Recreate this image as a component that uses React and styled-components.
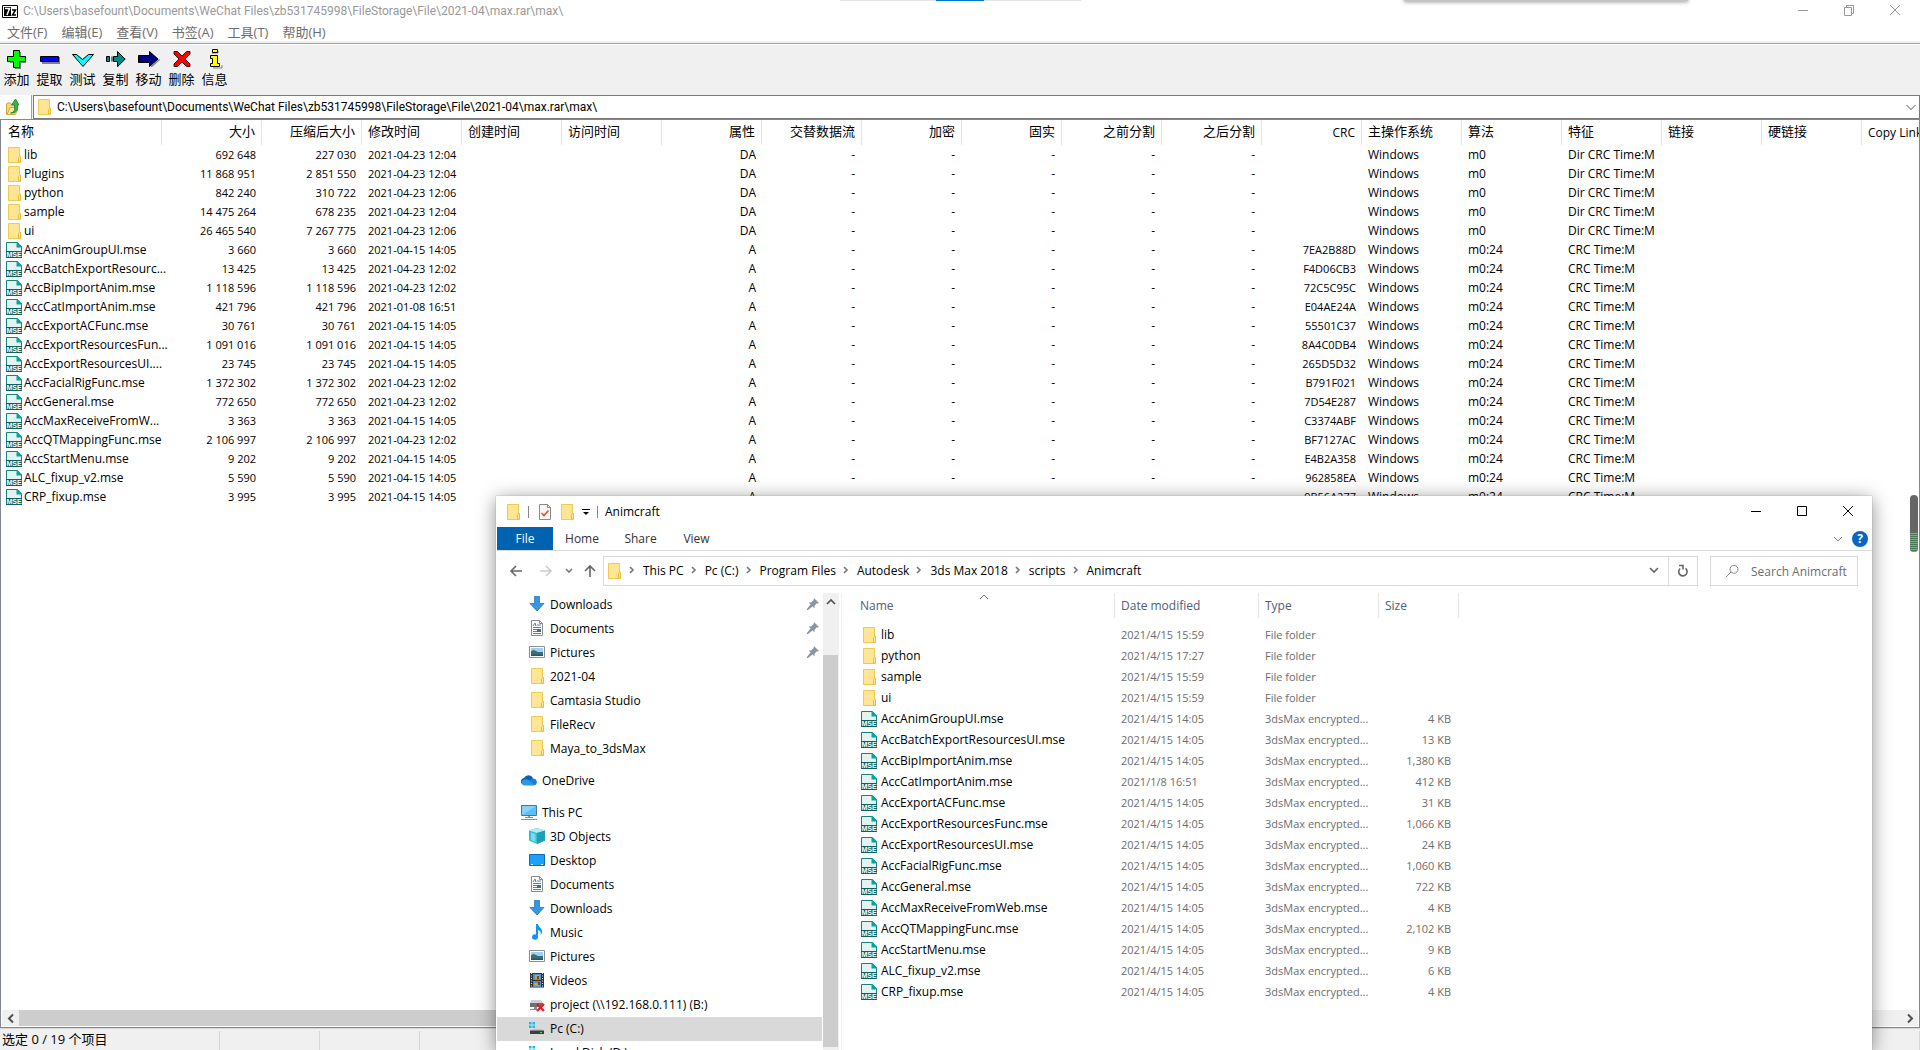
import React from "react";
import styled, { createGlobalStyle, css } from "styled-components";

const Global = createGlobalStyle`
  *, *::before, *::after { box-sizing: border-box; }
  html, body { margin: 0; padding: 0; overflow: hidden; }
  body, button, input, table {
    font-family: "Open Sans", "Noto Sans CJK SC", sans-serif;
    font-size: 12px;
    color: #000;
  }
  button { border: 0; padding: 0; margin: 0; background: none; cursor: default; white-space: nowrap; }
  input { border: 0; padding: 0; margin: 0; background: none; outline: none; min-width: 0; }
  svg { display: block; flex: none; }
`;

/* ---------- icons ---------- */

const Folder = () => (
  <svg width="16" height="16" viewBox="0 0 16 16" aria-hidden="true">
    <path d="M2.500.5h11v9h1v6h-12z" fill="#ffe594" stroke="#efca50" />
    <path d="M12.500 15v-4.500l1-1h1v5.500z" fill="#ffeaa8" stroke="#e8bd3a" />
  </svg>
);

const Mse = () => (
  <svg width="16" height="16" viewBox="0 0 16 16" aria-hidden="true">
    <path d="M.5.5h10.500l4.500 4.500v10.500H.5z" fill="#e3f3f1" stroke="#16827c" />
    <path d="M10.500 0h1L16 4.500V5.500h-5.500z" fill="#0aa39b" />
    <path d="M0 9h16v7H0z" fill="#0c6361" />
    <text x="8" y="15" textAnchor="middle" fontSize="7" fontWeight="700" fill="#fff" fontFamily="Liberation Sans, sans-serif">MSE</text>
  </svg>
);

const SevenZip = () => (
  <svg width="16" height="13" viewBox="0 0 16 13" aria-hidden="true">
    <path d="M.5.5h15v12H.5z" fill="#fff" stroke="#000" />
    <path d="M2 2h7v9H2z" fill="#000" />
    <path d="M3 3.500h4.500L5 10" fill="none" stroke="#fff" strokeWidth="1.500" />
    <path d="M10 5h3.500L10.500 10H14" fill="none" stroke="#000" strokeWidth="1.500" />
  </svg>
);

const toolIcons = {
  add: (
    <>
      <path d="M10 4h6v5h5v6h-5v6h-6v-6H5V9h5z" fill="#808080" />
      <path d="M8.500 2.500h6v6h6v5h-6v6h-6v-6h-6v-5h6z" fill="#0f0" stroke="#000" />
    </>
  ),
  extract: (
    <>
      <path d="M4 9h18v7H4z" fill="#808080" />
      <path d="M2.500 8.500h18v5h-18z" fill="#00f" stroke="#000" />
    </>
  ),
  test: <path d="M1.500 6.500h4l6 5 6-5h5L12 18.500z" fill="#0ff" stroke="#000" />,
  copy: (
    <>
      <path d="M13 17l8-7 1 1-8 8h-1z" fill="#808080" />
      <path d="M2.500 8.500h3v5h-3zM8 8.500v5M9.500 8.500h4v-5l7.500 7.500-7.500 7.500v-5h-4z" fill="#088" stroke="#000" />
    </>
  ),
  move: (
    <>
      <path d="M14 18l8-7 1 1-8 7h-1z" fill="#808080" />
      <path d="M1.500 7.500h11v-4L21 11l-8.500 7.500v-4h-11z" fill="#000080" stroke="#000" />
    </>
  ),
  remove: (
    <path d="M4 3.500h3.500L12 8l4.500-4.500H20V6l-5 5 5 5v2.500h-3.500L12 14l-4.500 4.500H4V16l5-5-5-5z" fill="#f00" stroke="#000" strokeWidth=".8" />
  ),
  info: (
    <>
      <path d="M9 5h6V3M10 20h9v-3" fill="none" stroke="#808080" />
      <path d="M9.500 1.500h5v3h-5zM7.500 7.500h7v8h2v3h-9v-3h2v-5h-2z" fill="#ff0" stroke="#000" />
    </>
  ),
};

const UpFolder = () => (
  <svg width="16" height="18" viewBox="0 0 16 18" aria-hidden="true">
    <path d="M1.500 6l1-1h3l1 1.500h3v9l-8 1z" fill="#f3dc80" stroke="#c9a736" />
    <path d="M2 16.500L5 9.500h8l-2.500 7z" fill="#fbeda9" stroke="#d0ac3c" />
    <path d="M5.500 15c4-.5 4.500-3 4-8H6.500l4-6 3.500 6h-1.500c.7 5-1 8.500-7 8z" fill="#39b54a" stroke="#1c7a2b" strokeWidth=".8" />
  </svg>
);

const Stroke = ({ d, w = 12, h = 12, color = "#666", width = 1 }) => (
  <svg width={w} height={h} viewBox={`0 0 ${w} ${h}`} fill="none" stroke={color} strokeWidth={width} aria-hidden="true">
    <path d={d} />
  </svg>
);

const Refresh = () => (
  <Stroke w={12} h={14} color="#666" width={1.6} d="M3.200 4.500A4.200 4.200 0 1 0 8.500 4.400M2 1.500h4v4" />
);

const navIcons = {
  downloads: <path d="M5.500.5h5v7h4.500L8 15 1 7.500h4.500z" fill="#3795e6" stroke="#2a78c0" strokeWidth=".8" />,
  documents: (
    <>
      <path d="M2.500.5h8l3 3v12h-11z" fill="#fff" stroke="#8a8a8a" />
      <path d="M10.500.5v3h3" fill="none" stroke="#8a8a8a" />
      <path d="M4 6l2-3 1 3M8 5h4M4 7.500h8M4 9.500h4M4 11.500h4M4 13.500h8" fill="none" stroke="#3f86c6" />
      <path d="M8 9h4v3H8z" fill="#2f7391" />
    </>
  ),
  pictures: (
    <>
      <path d="M.5 2.500h15v11H.5z" fill="#fff" stroke="#8a8f94" />
      <path d="M2 4h12v8H2z" fill="#9ed0f4" />
      <path d="M2 7l3-1 4 2h5v4H2z" fill="#3c7079" />
      <path d="M2 10.500h12V12H2z" fill="#29566c" />
    </>
  ),
  onedrive: (
    <>
      <path d="M1 12a3.500 3.500 0 0 1 2-6A5 5 0 0 1 12 6l-3 7H3z" fill="#0f5fb6" />
      <path d="M3 13.500a3 3 0 0 1-1-5.500c3-1.500 5-.5 6 .5l4-1.500a3.300 3.300 0 0 1 1 6.500z" fill="#2899e8" />
      <path d="M8 8.500l4-2a3.500 3.500 0 0 1 2 6.500z" fill="#1780d4" />
    </>
  ),
  pc: (
    <>
      <path d="M.5 1.500h15v10H.5z" fill="#5cc0f8" stroke="#3d7ba5" />
      <path d="M1 11V2h14z" fill="#86d2fc" />
      <path d="M7 12h2v1.500H7z" fill="#8aa0ae" />
      <path d="M4 13.500h8M0 15.500h16" stroke="#7f95a3" fill="none" />
    </>
  ),
  objects: (
    <>
      <path d="M8 0l8 2.500v10L8 16l-8-3.500v-10z" fill="#31bfd3" />
      <path d="M8 0l8 2.500L8 5 0 2.500z" fill="#b1eaf2" />
      <path d="M8 5l8-2.500v10L8 16z" fill="#1aa0b8" />
      <path d="M2 4.500l4.500 1.500v8L2 12z" fill="#7bdbe8" />
    </>
  ),
  desktop: (
    <>
      <path d="M.5 2.500h15v11H.5z" fill="#1ba1fb" stroke="#0b6cb8" />
      <path d="M2 12.500h2M12 12.500h2" stroke="#d6efff" fill="none" />
    </>
  ),
  music: <path d="M7 0h2c0 3 4.500 4 4 8.500-.3 1-.8 2-1.500 2.500.8-3-.5-4.500-2.500-5v7a3 2.700 0 1 1-2-2.500z" fill="#0c97f2" />,
  videos: (
    <>
      <path d="M1 1h14v14.500H1z" fill="#333" />
      <path d="M4 2h8v6H4zM4 9h8v6H4z" fill="#4d8fd4" />
      <path d="M6 3h5v4H6zM5 11h5v3H5z" fill="#d4a12c" />
      <path d="M8 4h2v3H8zM9 10h2v3H9z" fill="#6b4b1c" />
      <path d="M2.500 1v14M13.500 1v14" stroke="#ddd" strokeDasharray="1 1.500" fill="none" />
    </>
  ),
  netdrive: (
    <>
      <path d="M2 4h10l2 3H1z" fill="#cfcfcf" />
      <path d="M1 7h13v4H1z" fill="#6e6e6e" />
      <path d="M5 11h3v3H1v-1h4z" fill="#8c8c8c" />
      <path d="M8 8l7 7M15 8l-7 7" stroke="#dc1f26" strokeWidth="2.200" fill="none" />
    </>
  ),
  cdrive: (
    <>
      <path d="M0 2h2.500v2.500H0zM3.500 2H6v2.500H3.500zM0 5.500h2.500V8H0zM3.500 5.500H6V8H3.500z" fill="#1cb7ef" />
      <path d="M4 9h9l1.500 1.500h-13z" fill="#c3c3c3" />
      <path d="M1 10.500h14V14H1z" fill="#3d3d3d" />
      <path d="M11 12h2v1h-2z" fill="#52e052" />
    </>
  ),
};

const NavIcon = ({ name }) =>
  name === "folder" ? (
    <Folder />
  ) : (
    <svg width="16" height="16" viewBox="0 0 16 16" aria-hidden="true">{navIcons[name]}</svg>
  );

const Pin = () => (
  <svg width="12" height="12" viewBox="0 0 12 12" aria-hidden="true">
    <path d="M7 0l5 5-1.500.5-1 0-2 2.500v2.500L5.500 8.500 1 12l-1 0 0-1L3.500 6.500 1.500 4.500H4L6.500 2.500z" fill="#8a97a3" />
  </svg>
);

/* ---------- archive manager ---------- */

const Screen = styled.div`
  position: relative;
  display: flex;
  flex-direction: column;
  height: 100vh;
  background: #fff;
  overflow: hidden;
`;

const TitleBar = styled.header`
  display: flex;
  align-items: center;
  height: 24px;
  padding: 0 1px 2px 2px;
  gap: 5px;
  color: #999;
`;

const TitleText = styled.span`
  flex: 1;
  font-family: Roboto, sans-serif;
  white-space: nowrap;
`;

const Controls = styled.div`
  display: flex;
  align-self: flex-start;
  padding-right: 1px;
`;

const ControlButton = styled.button`
  display: flex;
  align-items: center;
  justify-content: center;
  width: 46px;
  height: ${(p) => (p.$tall ? "30px" : "20px")};
`;

const MenuBar = styled.nav`
  display: flex;
  gap: 14px;
  height: 17px;
  padding-left: 7px;
`;

const MenuButton = styled.button`
  font-size: 13px;
  line-height: 17px;
  color: #6d6d6d;
`;

const Divider = styled.div`
  height: 4px;
  border-top: 2px solid #f0f0f0;
  border-bottom: 1px solid #fff;
  background: #a0a0a0;
`;

const Toolbar = styled.div`
  display: flex;
  height: 50px;
  padding-top: 3px;
  background: #f0f0f0;
`;

const ToolButton = styled.button`
  display: flex;
  flex-direction: column;
  align-items: center;
  width: 33px;
  font-size: 13px;
  line-height: 18px;
`;

const AddressRow = styled.div`
  display: flex;
  height: 24px;
  gap: 1px;
  background: #f0f0f0;
`;

const UpButton = styled.button`
  display: flex;
  align-items: center;
  width: 32px;
  padding-left: 5px;
  background: #fff;
  border-right: 1px solid #a0a0a0;
`;

const PathBox = styled.div`
  display: flex;
  flex: 1;
  align-items: center;
  gap: 5px;
  padding: 0 2px;
  background: #fff;
  border: 1px solid #7a7a7a;
`;

const PathInput = styled.input`
  flex: 1;
  font-family: Roboto, sans-serif;
`;

const ListPane = styled.main`
  display: flex;
  flex: 1;
  flex-direction: column;
  min-height: 0;
  border: 1px solid #828790;
`;

const ListScroll = styled.div`
  flex: 1;
  min-height: 0;
  padding-left: 1px;
  overflow: hidden;
`;

const cellText = css`
  padding: 0 6px;
  white-space: nowrap;
  text-align: ${(p) => (p.$right ? "right" : "left")};
`;

const ArchiveTable = styled.table`
  width: 1960px;
  table-layout: fixed;
  border-collapse: separate;
  border-spacing: 0;
`;

const ArchiveHead = styled.th`
  ${cellText}
  height: 25px;
  padding-bottom: ${(p) => (p.$latin ? "0" : "2px")};
  font-size: ${(p) => (p.$latin ? "12px" : "13px")};
  line-height: 19px;
  font-weight: 400;
  border-right: 1px solid #e5e5e5;
`;

const ArchiveCell = styled.td`
  ${cellText}
  height: 19px;
  font-size: ${(p) => (p.$figures ? "11px" : "12px")};
  line-height: 19px;
  padding-left: ${(p) => (p.$name ? "4px" : "6px")};
  padding-right: ${(p) => (p.$dash ? "7px" : "6px")};
`;

const FileName = styled.div`
  display: flex;
  align-items: center;
  gap: ${(p) => p.$gap}px;
`;

const HScroll = styled.div`
  display: flex;
  height: 17px;
  padding: 0 1px 1px;
`;

const HTrack = styled.div`
  flex: 1;
  background: #f0f0f0;
`;

const HThumb = styled.div`
  width: 80%;
  height: 100%;
  background: #cdcdcd;
`;

const ScrollButton = styled.button`
  display: flex;
  align-items: center;
  justify-content: center;
  width: 17px;
  height: 16px;
  background: #f0f0f0;
`;

const StatusBar = styled.footer`
  display: flex;
  height: 22px;
  padding-top: 2px;
  background: #f0f0f0;
  border-top: 1px solid #d7d7d7;
`;

const StatusPart = styled.span`
  flex: ${(p) => (p.$fill ? "1" : "none")};
  width: ${(p) => p.$w || 100}px;
  padding-left: 2px;
  font-size: 13px;
  line-height: 17px;
  border-right: 1px solid #d7d7d7;
`;

/* ---------- overlays from other windows ---------- */

const TopStrip = styled.div`
  position: absolute;
  top: 0;
  left: 840px;
  width: 241px;
  height: 1px;
  background: linear-gradient(90deg, #e4e4e4 96px, #0078d7 96px 144px, #e4e4e4 144px);
`;

const TopShadow = styled.div`
  position: absolute;
  top: -8px;
  left: 1404px;
  width: 284px;
  height: 9px;
  background: #c4c4c4;
  box-shadow: 0 1px 4px #999;
`;

const Meter = styled.div`
  position: absolute;
  top: 495px;
  right: 2px;
  width: 8px;
  height: 57px;
  padding-top: 38px;
  border-radius: 4px;
  background: #666;
  overflow: hidden;
`;

const MeterFill = styled.div`
  height: 19px;
  background: repeating-linear-gradient(#55c06f 0 1px, #4c7a57 1px 2px);
`;

/* ---------- file explorer ---------- */

const Explorer = styled.section`
  position: absolute;
  top: 496px;
  left: 496px;
  right: 48px;
  bottom: 0;
  display: flex;
  flex-direction: column;
  padding-left: 1px;
  background: #fff;
  box-shadow: 0 0 1px #888, 0 3px 18px rgba(0, 0, 0, 0.45);
  overflow: hidden;
`;

const Caption = styled.div`
  display: flex;
  align-items: center;
  height: 31px;
  padding-left: 8px;
`;

const QuickTools = styled.div`
  display: flex;
  align-items: center;
  gap: 7px;
  flex: 1;
`;

const Bar = styled.i`
  width: 1px;
  height: 12px;
  background: #888;
`;

const Tabs = styled.div`
  display: flex;
  height: 24px;
  border-bottom: 1px solid #dadbdc;
`;

const Tab = styled.button`
  width: ${(p) => p.$w}px;
  color: ${(p) => (p.$active ? "#fff" : "#333")};
  background: ${(p) => (p.$active ? "#0063b1" : "none")};
`;

const TabsEnd = styled.div`
  display: flex;
  flex: 1;
  align-items: center;
  justify-content: flex-end;
  gap: 9px;
  padding-right: 4px;
`;

const Help = styled.button`
  width: 16px;
  height: 16px;
  border-radius: 8px;
  line-height: 16px;
  font-weight: 700;
  color: #fff;
  background: #0a66c2;
`;

const NavBar = styled.div`
  display: flex;
  align-items: center;
  height: 42px;
  padding: 0 14px 2px 12px;
`;

const NavArrows = styled.div`
  display: flex;
  align-items: center;
  width: 94px;
`;

const Arrow = styled.button`
  width: ${(p) => p.$w}px;
`;

const CrumbBox = styled.div`
  display: flex;
  flex: 1;
  align-items: center;
  height: 30px;
  padding-left: 2px;
  border: 1px solid #d9d9d9;
`;

const CrumbList = styled.div`
  display: flex;
  align-items: center;
  padding: 0 0 2px 7px;
`;

const Crumb = styled.button`
  padding-right: 7px;
`;

const CrumbSep = styled.span`
  display: flex;
  width: 14px;
`;

const DropButton = styled.button`
  display: flex;
  align-items: center;
  justify-content: center;
  width: 29px;
  height: 28px;
  margin-left: ${(p) => (p.$push ? "auto" : "0")};
  border-left: ${(p) => (p.$line ? "1px solid #d9d9d9" : "0")};
`;

const SearchBox = styled.label`
  display: flex;
  align-items: center;
  gap: 12px;
  width: 148px;
  height: 30px;
  margin-left: 12px;
  padding-left: 14px;
  border: 1px solid #d9d9d9;
`;

const SearchInput = styled.input`
  flex: 1;
  &::placeholder { color: #6d6d6d; opacity: 1; }
`;

const Body = styled.div`
  display: flex;
  flex: 1;
  min-height: 0;
`;

const Tree = styled.nav`
  width: 325px;
  overflow: hidden;
`;

const TreeItem = styled.button`
  display: flex;
  align-items: center;
  gap: 5px;
  width: 100%;
  height: 24px;
  margin: ${(p) => (p.$root ? "8px 0 0" : "0")};
  padding: 0 3px 2px ${(p) => (p.$root ? "24px" : "32px")};
  text-align: left;
  background: ${(p) => (p.$selected ? "#d9d9d9" : "none")};

  span { flex: 1; }
`;

const VScroll = styled.div`
  width: 16px;
  margin: 0 2px 0 1px;
  background: #f0f0f0;
`;

const VButton = styled.button`
  display: flex;
  align-items: center;
  justify-content: center;
  width: 15px;
  height: 17px;
`;

const VThumb = styled.div`
  width: 15px;
  height: calc(100% - 65px);
  margin-top: 45px;
  background: #cdcdcd;
`;

const Files = styled.div`
  flex: 1;
  padding-left: 12px;
  border-left: 1px solid #f0f0f0;
`;

const FileTable = styled.table`
  width: 605px;
  table-layout: fixed;
  border-collapse: separate;
  border-spacing: 0;
`;

const FileHead = styled.th`
  ${cellText}
  height: 25px;
  font-weight: 400;
  color: #4c607a;
  border-right: 1px solid #e5e5e5;
`;

const HeadInner = styled.div`
  position: relative;
`;

const SortMark = styled.span`
  position: absolute;
  top: -3px;
  left: 119px;
`;

const Spacer = styled.td`
  height: 6px;
  padding: 0;
`;

const FileCell = styled.td`
  ${cellText}
  height: 21px;
  font-size: ${(p) => (p.$main ? "12px" : "11px")};
  line-height: 21px;
  color: ${(p) => (p.$main ? "#000" : "#6d6d6d")};
  padding-left: ${(p) => (p.$main ? "7px" : "6px")};
  padding-right: ${(p) => (p.$right ? "8px" : "6px")};
`;

/* ---------- data ---------- */

const PATH = "C:\\Users\\basefount\\Documents\\WeChat Files\\zb531745998\\FileStorage\\File\\2021-04\\max.rar\\max\\";

const menus = ["文件(F)", "编辑(E)", "查看(V)", "书签(A)", "工具(T)", "帮助(H)"];

const tools = [
  ["add", "添加"],
  ["extract", "提取"],
  ["test", "测试"],
  ["copy", "复制"],
  ["move", "移动"],
  ["remove", "删除"],
  ["info", "信息"],
];

const columns = [
  ["名称", false],
  ["大小", true],
  ["压缩后大小", true],
  ["修改时间", false],
  ["创建时间", false],
  ["访问时间", false],
  ["属性", true],
  ["交替数据流", true],
  ["加密", true],
  ["固实", true],
  ["之前分割", true],
  ["之后分割", true],
  ["CRC", true],
  ["主操作系统", false],
  ["算法", false],
  ["特征", false],
  ["链接", false],
  ["硬链接", false],
  ["Copy Link", false],
];

const archive = [
  ["lib", "692 648", "227 030", "2021-04-23 12:04"],
  ["Plugins", "11 868 951", "2 851 550", "2021-04-23 12:04"],
  ["python", "842 240", "310 722", "2021-04-23 12:06"],
  ["sample", "14 475 264", "678 235", "2021-04-23 12:04"],
  ["ui", "26 465 540", "7 267 775", "2021-04-23 12:06"],
  ["AccAnimGroupUI.mse", "3 660", "3 660", "2021-04-15 14:05", "7EA2B88D"],
  ["AccBatchExportResourc...", "13 425", "13 425", "2021-04-23 12:02", "F4D06CB3"],
  ["AccBipImportAnim.mse", "1 118 596", "1 118 596", "2021-04-23 12:02", "72C5C95C"],
  ["AccCatImportAnim.mse", "421 796", "421 796", "2021-01-08 16:51", "E04AE24A"],
  ["AccExportACFunc.mse", "30 761", "30 761", "2021-04-15 14:05", "55501C37"],
  ["AccExportResourcesFun...", "1 091 016", "1 091 016", "2021-04-15 14:05", "8A4C0DB4"],
  ["AccExportResourcesUI....", "23 745", "23 745", "2021-04-15 14:05", "265D5D32"],
  ["AccFacialRigFunc.mse", "1 372 302", "1 372 302", "2021-04-23 12:02", "B791F021"],
  ["AccGeneral.mse", "772 650", "772 650", "2021-04-23 12:02", "7D54E287"],
  ["AccMaxReceiveFromW...", "3 363", "3 363", "2021-04-15 14:05", "C3374ABF"],
  ["AccQTMappingFunc.mse", "2 106 997", "2 106 997", "2021-04-23 12:02", "BF7127AC"],
  ["AccStartMenu.mse", "9 202", "9 202", "2021-04-15 14:05", "E4B2A358"],
  ["ALC_fixup_v2.mse", "5 590", "5 590", "2021-04-15 14:05", "962858EA"],
  ["CRP_fixup.mse", "3 995", "3 995", "2021-04-15 14:05", "9B56A277"],
];

const crumbs = ["This PC", "Pc (C:)", "Program Files", "Autodesk", "3ds Max 2018", "scripts", "Animcraft"];

const tree = [
  { label: "Downloads", icon: "downloads", pin: true },
  { label: "Documents", icon: "documents", pin: true },
  { label: "Pictures", icon: "pictures", pin: true },
  { label: "2021-04", icon: "folder" },
  { label: "Camtasia Studio", icon: "folder" },
  { label: "FileRecv", icon: "folder" },
  { label: "Maya_to_3dsMax", icon: "folder" },
  { label: "OneDrive", icon: "onedrive", root: true },
  { label: "This PC", icon: "pc", root: true },
  { label: "3D Objects", icon: "objects" },
  { label: "Desktop", icon: "desktop" },
  { label: "Documents", icon: "documents" },
  { label: "Downloads", icon: "downloads" },
  { label: "Music", icon: "music" },
  { label: "Pictures", icon: "pictures" },
  { label: "Videos", icon: "videos" },
  { label: "project (\\\\192.168.0.111) (B:)", icon: "netdrive" },
  { label: "Pc (C:)", icon: "cdrive", selected: true },
  { label: "Local Disk (D:)", icon: "cdrive" },
];

const files = [
  ["lib", "2021/4/15 15:59"],
  ["python", "2021/4/15 17:27"],
  ["sample", "2021/4/15 15:59"],
  ["ui", "2021/4/15 15:59"],
  ["AccAnimGroupUI.mse", "2021/4/15 14:05", "4 KB"],
  ["AccBatchExportResourcesUI.mse", "2021/4/15 14:05", "13 KB"],
  ["AccBipImportAnim.mse", "2021/4/15 14:05", "1,380 KB"],
  ["AccCatImportAnim.mse", "2021/1/8 16:51", "412 KB"],
  ["AccExportACFunc.mse", "2021/4/15 14:05", "31 KB"],
  ["AccExportResourcesFunc.mse", "2021/4/15 14:05", "1,066 KB"],
  ["AccExportResourcesUI.mse", "2021/4/15 14:05", "24 KB"],
  ["AccFacialRigFunc.mse", "2021/4/15 14:05", "1,060 KB"],
  ["AccGeneral.mse", "2021/4/15 14:05", "722 KB"],
  ["AccMaxReceiveFromWeb.mse", "2021/4/15 14:05", "4 KB"],
  ["AccQTMappingFunc.mse", "2021/4/15 14:05", "2,102 KB"],
  ["AccStartMenu.mse", "2021/4/15 14:05", "9 KB"],
  ["ALC_fixup_v2.mse", "2021/4/15 14:05", "6 KB"],
  ["CRP_fixup.mse", "2021/4/15 14:05", "4 KB"],
];

/* ---------- views ---------- */

function ArchiveRow({ row }) {
  const [name, size, packed, time, crc] = row;
  const values = [
    size, packed, time, "", "", crc ? "A" : "DA", "-", "-", "-", "-", "-",
    crc || "", "Windows", crc ? "m0:24" : "m0", crc ? "CRC Time:M" : "Dir CRC Time:M", "", "", "",
  ];
  return (
    <tr>
      <ArchiveCell $name>
        <FileName $gap={2}>
          {crc ? <Mse /> : <Folder />}
          <span>{name}</span>
        </FileName>
      </ArchiveCell>
      {values.map((value, i) => (
        <ArchiveCell key={i} $right={columns[i + 1][1]} $dash={value === "-"} $figures={i < 3 || i === 11}>
          {value}
        </ArchiveCell>
      ))}
    </tr>
  );
}

function ArchiveManager() {
  return (
    <>
      <TitleBar>
        <SevenZip />
        <TitleText>{PATH}</TitleText>
        <Controls>
          <ControlButton aria-label="最小化"><Stroke color="#999" d="M1 6.500h10" /></ControlButton>
          <ControlButton aria-label="还原"><Stroke color="#999" d="M1.500 3.500h7v8h-7zM3.500 3V1.500h7v8H9" /></ControlButton>
          <ControlButton aria-label="关闭"><Stroke color="#999" d="M1 1l10 10M11 1L1 11" /></ControlButton>
        </Controls>
      </TitleBar>
      <MenuBar>
        {menus.map((m) => <MenuButton key={m}>{m}</MenuButton>)}
      </MenuBar>
      <Divider />
      <Toolbar>
        {tools.map(([icon, label]) => (
          <ToolButton key={icon}>
            <svg width="24" height="22" viewBox="0 0 24 22" aria-hidden="true">{toolIcons[icon]}</svg>
            {label}
          </ToolButton>
        ))}
      </Toolbar>
      <AddressRow>
        <UpButton aria-label="向上"><UpFolder /></UpButton>
        <PathBox>
          <Folder />
          <PathInput aria-label="路径" defaultValue={PATH} />
          <button aria-label="展开"><Stroke color="#555" d="M1.500 4l4.500 4.500L10.500 4" /></button>
        </PathBox>
      </AddressRow>
      <ListPane>
        <ListScroll>
          <ArchiveTable>
            <colgroup>
              {columns.map(([label], i) => <col key={label} width={i ? 100 : 160} />)}
            </colgroup>
            <thead>
              <tr>
                {columns.map(([label, right]) => (
                  <ArchiveHead key={label} $right={right} $latin={/^[A-Z]/.test(label)}>{label}</ArchiveHead>
                ))}
              </tr>
            </thead>
            <tbody>
              {archive.map((row) => <ArchiveRow key={row[0]} row={row} />)}
            </tbody>
          </ArchiveTable>
        </ListScroll>
        <HScroll>
          <ScrollButton aria-label="向左"><Stroke color="#505050" width={2} d="M8 2.500L4 6.500l4 4" /></ScrollButton>
          <HTrack><HThumb /></HTrack>
          <ScrollButton aria-label="向右"><Stroke color="#505050" width={2} d="M4 2.500l4 4-4 4" /></ScrollButton>
        </HScroll>
      </ListPane>
      <StatusBar>
        <StatusPart $w={220}>选定 0 / 19 个项目</StatusPart>
        <StatusPart />
        <StatusPart />
        <StatusPart $fill />
      </StatusBar>
    </>
  );
}

function FileExplorer() {
  return (
    <Explorer>
      <Caption>
        <QuickTools>
          <Folder />
          <Bar />
          <svg width="16" height="16" viewBox="0 0 16 16" aria-hidden="true">
            <path d="M3.500.5h8l3 3v12h-11z" fill="#f7f7f7" stroke="#8a8a8a" />
            <path d="M11.500.5v3h3" fill="none" stroke="#8a8a8a" />
            <path d="M5.500 9l2.500 2.500 4.500-5" fill="none" stroke="#e8501e" strokeWidth="1.600" />
          </svg>
          <Folder />
          <Stroke w={8} h={8} color="#000" d="M0 1.500h8M1.500 4.500h5M2.500 5.500h3M3.500 6.500h1" />
          <Bar />
          <span>Animcraft</span>
        </QuickTools>
        <Controls>
          <ControlButton $tall aria-label="Minimize"><Stroke color="#000" d="M1 6.500h10" /></ControlButton>
          <ControlButton $tall aria-label="Maximize"><Stroke color="#000" d="M1.500 1.500h9v9h-9z" /></ControlButton>
          <ControlButton $tall aria-label="Close"><Stroke color="#000" d="M1 1l10 10M11 1L1 11" /></ControlButton>
        </Controls>
      </Caption>
      <Tabs>
        <Tab $active $w={56}>File</Tab>
        <Tab $w={58}>Home</Tab>
        <Tab $w={59}>Share</Tab>
        <Tab $w={53}>View</Tab>
        <TabsEnd>
          <Stroke w={10} h={8} color="#888" d="M1 2l4 4 4-4" />
          <Help aria-label="Help">?</Help>
        </TabsEnd>
      </Tabs>
      <NavBar>
        <NavArrows>
          <Arrow $w={30} aria-label="Back"><Stroke w={14} h={12} color="#666" width={1.6} d="M13 6H2M7 1L2 6l5 5" /></Arrow>
          <Arrow $w={26} aria-label="Forward"><Stroke w={14} h={12} color="#ccc" width={1.6} d="M1 6h11M7 1l5 5-5 5" /></Arrow>
          <Arrow $w={18} aria-label="Recent"><Stroke w={8} h={8} color="#777" width={1.6} d="M1 2l3 3 3-3" /></Arrow>
          <Arrow $w={14} aria-label="Up"><Stroke w={14} h={14} color="#666" width={1.6} d="M7 13V2M2 7l5-5 5 5" /></Arrow>
        </NavArrows>
        <CrumbBox>
          <Folder />
          <CrumbList>
            {crumbs.map((c) => (
              <React.Fragment key={c}>
                <CrumbSep><Stroke w={6} h={8} color="#777" width={1.6} d="M1 1l3 3-3 3" /></CrumbSep>
                <Crumb>{c}</Crumb>
              </React.Fragment>
            ))}
          </CrumbList>
          <DropButton $push aria-label="Previous locations"><Stroke w={10} h={8} color="#666" width={1.6} d="M1 1l4 4 4-4" /></DropButton>
          <DropButton $line aria-label="Refresh"><Refresh /></DropButton>
        </CrumbBox>
        <SearchBox>
          <Stroke w={14} h={14} color="#888" d="M6 8A4 4 0 1 1 8.500 9.300L6 8L1 13" />
          <SearchInput aria-label="Search Animcraft" placeholder="Search Animcraft" />
        </SearchBox>
      </NavBar>
      <Body>
        <Tree>
          {tree.map((item, i) => (
            <TreeItem key={i} $root={item.root} $selected={item.selected}>
              <NavIcon name={item.icon} />
              <span>{item.label}</span>
              {item.pin && <Pin />}
            </TreeItem>
          ))}
        </Tree>
        <VScroll>
          <VButton aria-label="Scroll up"><Stroke w={10} h={8} color="#505050" width={1.6} d="M1 6l4-4 4 4" /></VButton>
          <VThumb />
        </VScroll>
        <Files>
          <FileTable>
            <colgroup>
              <col width="261" />
              <col width="144" />
              <col width="120" />
              <col width="80" />
            </colgroup>
            <thead>
              <tr>
                <FileHead>
                  <HeadInner>
                    Name
                    <SortMark><Stroke w={10} h={6} color="#777" d="M1 5l4-4 4 4" /></SortMark>
                  </HeadInner>
                </FileHead>
                <FileHead>Date modified</FileHead>
                <FileHead>Type</FileHead>
                <FileHead>Size</FileHead>
              </tr>
            </thead>
            <tbody>
              <tr><Spacer colSpan={4} /></tr>
              {files.map(([name, date, size]) => (
                <tr key={name}>
                  <FileCell $main>
                    <FileName $gap={4}>
                      {size ? <Mse /> : <Folder />}
                      <span>{name}</span>
                    </FileName>
                  </FileCell>
                  <FileCell>{date}</FileCell>
                  <FileCell>{size ? "3dsMax encrypted..." : "File folder"}</FileCell>
                  <FileCell $right>{size || ""}</FileCell>
                </tr>
              ))}
            </tbody>
          </FileTable>
        </Files>
      </Body>
    </Explorer>
  );
}

export default function App() {
  return (
    <Screen>
      <Global />
      <ArchiveManager />
      <TopStrip />
      <TopShadow />
      <Meter><MeterFill /></Meter>
      <FileExplorer />
    </Screen>
  );
}
